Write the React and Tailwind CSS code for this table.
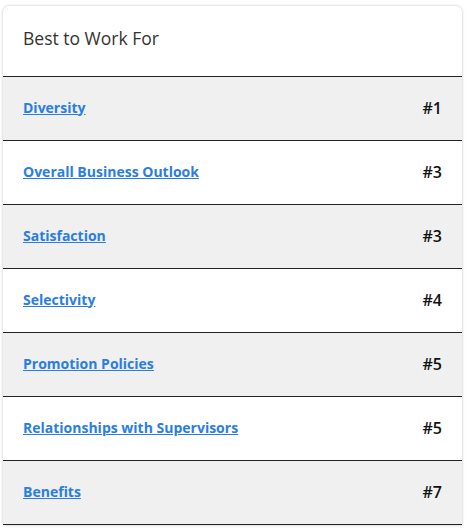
import React from "react";

const rows = [
  { name: "Diversity", rank: "#1" },
  { name: "Overall Business Outlook", rank: "#3" },
  { name: "Satisfaction", rank: "#3" },
  { name: "Selectivity", rank: "#4" },
  { name: "Promotion Policies", rank: "#5" },
  { name: "Relationships with Supervisors", rank: "#5" },
  { name: "Benefits", rank: "#7" },
];

const App = () => {
  return (
    <div className="min-h-screen bg-white pt-[6px] pl-[3px]" style={{ fontFamily: "'Open Sans', Lato, sans-serif" }}>
      <div className="w-[459px] bg-white rounded-t-[6px] shadow-[0_0_3px_rgba(0,0,0,0.25)] overflow-hidden">
        {/* Header */}
        <div className="h-[70px] pl-[20px] pt-[19px] text-[17.5px] text-[#333]">
          Best to Work For
        </div>

        {/* Ranking rows */}
        {rows.map((row, i) => (
          <div
            key={row.name}
            className={`h-[64px] border-t border-[#222] flex items-center justify-between pl-[20px] pr-[20px] ${
              i % 2 === 0 ? "bg-[#f0f0f0]" : "bg-white"
            }`}
          >
            <a href="#" className="text-[14px] font-bold text-[#2a7de1] underline -mt-[3px]">
              {row.name}
            </a>
            <span className="text-[16px] font-semibold text-[#111] -mt-[1px]">{row.rank}</span>
          </div>
        ))}
        <div className="border-t border-[#222]" />
      </div>
    </div>
  );
};

export default App;
